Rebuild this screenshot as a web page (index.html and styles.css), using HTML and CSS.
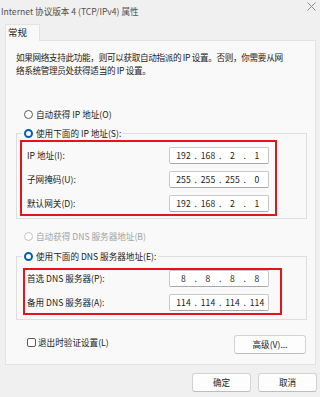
FILE: index.html
```html
<!doctype html>
<html>
<head>
<meta charset="utf-8">
<title>Internet 协议版本 4 (TCP/IPv4) 属性</title>
<link rel="stylesheet" href="styles.css">
</head>
<body>
<div class="titlebar">
	<span class="title">Internet 协议版本 4 (TCP/IPv4) 属性</span>
	<svg class="close" width="9" height="9" viewBox="0 0 9 9"><path d="M0.5 0.5L8.5 8.5M8.5 0.5L0.5 8.5" stroke="#8a8a8a" stroke-width="1" fill="none"/></svg>
</div>
<div class="tabs"><span class="tab">常规</span></div>
<div class="panel">
	<p class="intro">如果网络支持此功能，则可以获取自动指派的 IP 设置。否则，你需要从网<br>络系统管理员处获得适当的 IP 设置。</p>

	<label class="radio first"><i></i>自动获得 IP 地址(O)</label>
	<fieldset class="group g1">
		<legend><label class="radio on"><i></i>使用下面的 IP 地址(S):</label></legend>
		<div class="mark m1">
			<span>IP 地址(I):</span>
			<div class="ip"><span class="oct">192</span><span class="dot">.</span><span class="oct">168</span><span class="dot">.</span><span class="oct">2</span><span class="dot">.</span><span class="oct">1</span></div>
			<span>子网掩码(U):</span>
			<div class="ip"><span class="oct">255</span><span class="dot">.</span><span class="oct">255</span><span class="dot">.</span><span class="oct">255</span><span class="dot">.</span><span class="oct">0</span></div>
			<span>默认网关(D):</span>
			<div class="ip"><span class="oct">192</span><span class="dot">.</span><span class="oct">168</span><span class="dot">.</span><span class="oct">2</span><span class="dot">.</span><span class="oct">1</span></div>
		</div>
	</fieldset>

	<label class="radio off"><i></i>自动获得 DNS 服务器地址(B)</label>
	<fieldset class="group g2">
		<legend><label class="radio on"><i></i>使用下面的 DNS 服务器地址(E):</label></legend>
		<div class="mark m2">
			<span>首选 DNS 服务器(P):</span>
			<div class="ip"><span class="oct">8</span><span class="dot">.</span><span class="oct">8</span><span class="dot">.</span><span class="oct">8</span><span class="dot">.</span><span class="oct">8</span></div>
			<span>备用 DNS 服务器(A):</span>
			<div class="ip"><span class="oct">114</span><span class="dot">.</span><span class="oct">114</span><span class="dot">.</span><span class="oct">114</span><span class="dot">.</span><span class="oct">114</span></div>
		</div>
	</fieldset>

	<div class="opts">
		<label class="check"><i></i>退出时验证设置(L)</label>
		<button class="btn adv">高级(V)...</button>
	</div>
</div>
<div class="actions">
	<button class="btn">确定</button>
	<button class="btn">取消</button>
</div>
</body>
</html>
```
FILE: styles.css
```css
*{ margin:0; padding:0; box-sizing:border-box;}
body{ width:320px; height:397px; overflow:hidden; background:#f0f0f0; font:8.6px/13px "Noto Sans CJK SC", sans-serif; color:#1b1b1b;}

.titlebar{ height:24px; display:flex; justify-content:space-between; align-items:flex-start; padding:0 4px 0 1px; color:#505050;}
.title{ margin-top:5px;}
.close{ margin-top:2px;}

.tabs{ height:16px; padding-left:5px;}
.tab{ display:block; position:relative; z-index:1; width:35px; height:17px; background:#f9f9f9; border:1px solid #e3e3e3; border-bottom:0; padding-left:2px; line-height:15px; font-size:9.5px;}

.panel{ margin:0 4px 0 5px; height:325px; background:#f9f9f9; border:1px solid #e3e3e3; padding:10px 8px 0 10px;}
.intro{ line-height:13px; white-space:nowrap; letter-spacing:-0.33px;}

.radio{ display:flex; align-items:center; gap:3px; height:13px;}
.radio i{ width:9px; height:9px; border:1px solid #5a5a5a; border-radius:50%; background:#fff;}
.radio.on i{ border:2.5px solid #005fb8;}
.radio.off{ color:#a3a3a3;}
.radio.off i{ border-color:#c2c2c2;}
.first{ margin:31px 0 0 8px;}
.off{ margin:11px 0 0 8px;}

.group{ border:1px solid #dedede; min-width:0;}
.g1{ margin-top:6px;}
.g2{ margin-top:7px;}
.group legend{ margin-left:5px; padding:0 2px;}

.mark{ border:2px solid #e5141b; display:grid; grid-template-columns:1fr 100px; row-gap:7px; align-items:center;}
.m1{ width:257px; margin:0 0 2px 3px; padding:5px 6px 2px 5px;}
.m2{ width:259px; margin:4.5px 0 4px 6px; padding:0 11px 2px 2px;}

.ip{ height:17px; background:#fff; border:1px solid #c8c8c8; border-bottom-color:#a8a8a8; border-radius:2px; display:flex; align-items:center; padding-left:5px; color:#222;}
.oct{ width:17px; text-align:center;}
.dot{ width:7.5px; text-align:center;}

.opts{ display:flex; justify-content:space-between; align-items:flex-start; margin-top:15px;}
.check{ display:flex; align-items:center; gap:2px; height:13px; margin:1px 0 0 11px;}
.check i{ width:9px; height:9px; border:1px solid #5a5a5a; border-radius:2px; background:#fff;}

.btn{ height:19px; width:59px; border:1px solid #d3d3d3; border-bottom-color:#bdbdbd; border-radius:3px; background:#fdfdfd; font:inherit; color:#1b1b1b;}
.adv{ width:72px; margin-right:1px;}

.actions{ display:flex; justify-content:flex-end; gap:7px; padding:8px 3px 0 0;}
```
